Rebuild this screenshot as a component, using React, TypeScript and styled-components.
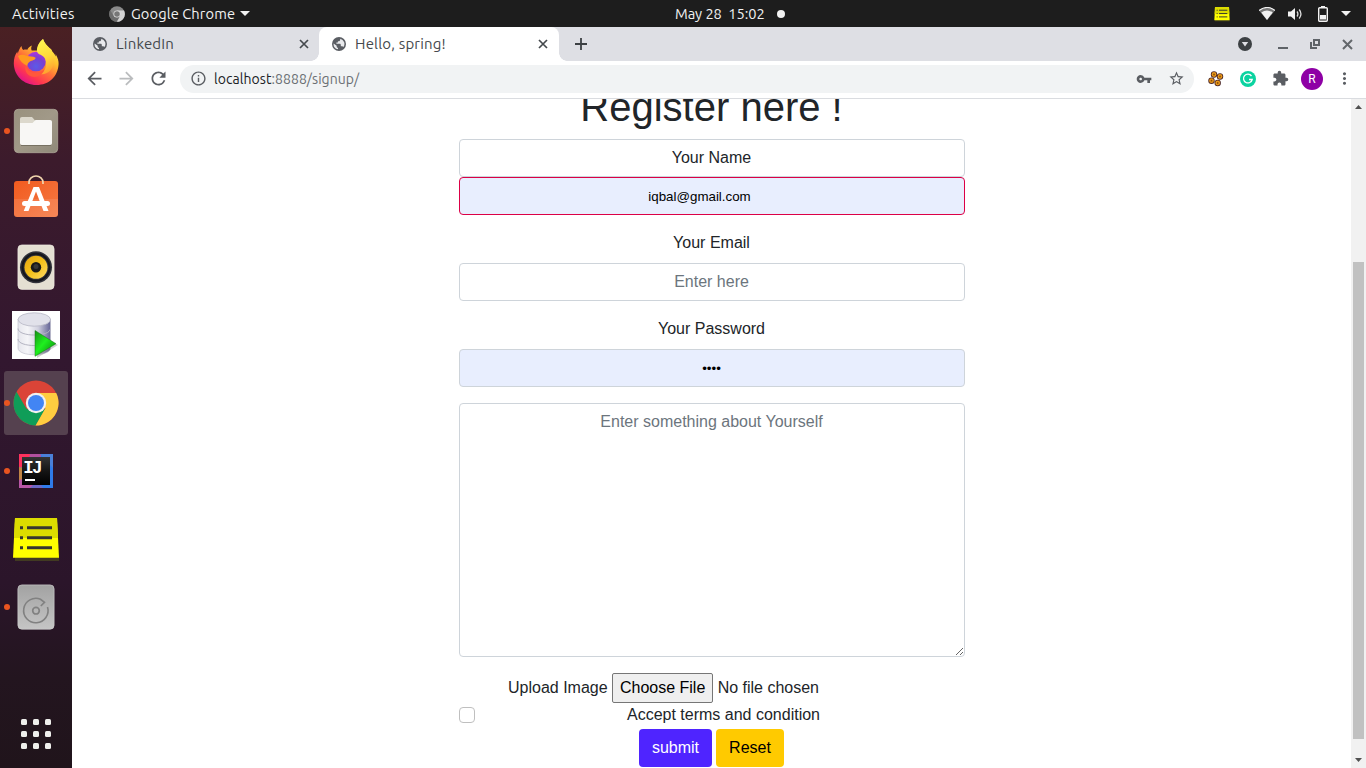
import React from "react";
import styled, { createGlobalStyle } from "styled-components";
import { MdArrowBack, MdArrowForward, MdRefresh, MdInfoOutline, MdVpnKey, MdStarBorder, MdExtension, MdMoreVert } from "react-icons/md";

const GlobalStyle = createGlobalStyle`
  * { box-sizing: border-box; }
  body { margin: 0; overflow: hidden; background: #fff; }
  svg { display: block; }
`;

const uiFont = `"Ubuntu", "Noto Sans", sans-serif`;

const Desktop = styled.div`
  display: flex;
  flex-direction: column;
  width: 1366px;
  height: 768px;
  overflow: hidden;
  font-family: ${uiFont};
`;

const TopBar = styled.header`
  display: flex;
  flex: none;
  align-items: center;
  height: 27px;
  padding: 0 15px 0 12px;
  background: #1d1d1d;
  color: #f2f2f2;
`;
const BarSide = styled.div<{ $width: number; $end?: boolean }>`
  display: flex;
  flex: none;
  align-items: center;
  width: ${(p) => p.$width}px;
  justify-content: ${(p) => (p.$end ? "flex-end" : "flex-start")};
`;
const BarText = styled.span<{ $width: number; $spacing?: number }>`
  width: ${(p) => p.$width}px;
  padding-bottom: 1px;
  font-size: 14.667px;
  line-height: 25px;
  white-space: pre;
  letter-spacing: ${(p) => p.$spacing ?? 0}px;
`;
const Gap = styled.span<{ $w: number }>`
  flex: none;
  width: ${(p) => p.$w}px;
`;

const Body = styled.div`
  display: flex;
  flex: 1;
  min-height: 0;
`;

const Dock = styled.nav`
  display: flex;
  flex: none;
  flex-direction: column;
  gap: 4px;
  width: 72px;
  padding: 4px 4px 2px;
  background: linear-gradient(#4a2023 0%, #3c1b2c 18%, #32172f 45%, #2b152a 75%, #23151f 88%, #20141b 100%);
`;
const DockItem = styled.div<{ $active?: boolean; $running?: boolean; $last?: boolean }>`
  position: relative;
  display: flex;
  flex: none;
  align-items: center;
  justify-content: center;
  height: 64px;
  margin-top: ${(p) => (p.$last ? "auto" : "0")};
  border-radius: 3px;
  background: ${(p) => (p.$active ? "#55414f" : "transparent")};
  &::before {
    content: "";
    display: ${(p) => (p.$running ? "block" : "none")};
    position: absolute;
    left: 0;
    top: 29px;
    width: 6px;
    height: 6px;
    border-radius: 50%;
    background: #e95420;
  }
`;
const AppGrid = styled.div`
  display: grid;
  grid-template-columns: repeat(3, 6px);
  gap: 6px;
`;
const AppDot = styled.i`
  height: 6px;
  border-radius: 1.5px;
  background: #efefec;
`;

const Browser = styled.section`
  display: flex;
  flex: 1;
  flex-direction: column;
  min-width: 0;
`;
const TabStrip = styled.div`
  display: flex;
  flex: none;
  height: 34px;
  background: #dedfe4;
  color: #45494d;
`;
const Tab = styled.div<{ $active?: boolean; $width: number }>`
  position: relative;
  display: flex;
  flex: none;
  align-items: center;
  width: ${(p) => p.$width}px;
  padding: 0 ${(p) => (p.$active ? 10 : 9)}px 0 ${(p) => (p.$active ? 12 : 20)}px;
  background: ${(p) => (p.$active ? "#fff" : "transparent")};
  border-radius: 8px 8px 0 0;
  &::before,
  &::after {
    content: "";
    display: ${(p) => (p.$active ? "block" : "none")};
    position: absolute;
    bottom: 0;
    width: 8px;
    height: 8px;
  }
  &::before {
    left: -8px;
    background: radial-gradient(circle at 0 0, transparent 7.5px, #fff 8px);
  }
  &::after {
    right: -8px;
    background: radial-gradient(circle at 100% 0, transparent 7.5px, #fff 8px);
  }
`;
const TabTitle = styled.span`
  flex: 1;
  margin-left: 8px;
  font-size: 15px;
  line-height: 34px;
  white-space: nowrap;
  letter-spacing: 0.18px;
`;
const StripButtons = styled.div`
  display: flex;
  flex: 1;
  align-items: center;
  padding: 0 12px 0 16px;
`;
const Spacer = styled.span`
  flex: 1;
`;

const Toolbar = styled.div`
  display: flex;
  flex: none;
  align-items: center;
  height: 38px;
  padding: 0 6px 2px;
  border-bottom: 1px solid #dadce0;
  background: #fff;
  color: #5a5d62;
`;
const Slot = styled.span<{ $muted?: boolean }>`
  display: flex;
  flex: none;
  align-items: center;
  justify-content: center;
  width: 32px;
  color: ${(p) => (p.$muted ? "#babcbe" : "inherit")};
`;
const Omnibox = styled.div`
  display: flex;
  flex: 1;
  align-items: center;
  height: 28px;
  margin: 0 6px;
  padding: 0 2px;
  border-radius: 14px;
  background: #f1f3f4;
`;
const Url = styled.span`
  flex: 1;
  font-size: 14px;
  line-height: 28px;
  color: #6b6f73;
  letter-spacing: 0.06px;
  b {
    font-weight: 400;
    color: #202124;
  }
`;
const Avatar = styled.span`
  width: 22px;
  height: 22px;
  border-radius: 50%;
  background: #8e00a5;
  color: #fff;
  font: 12px/22px Roboto, sans-serif;
  text-align: center;
`;

const Viewport = styled.div`
  display: flex;
  flex: 1;
  min-height: 0;
  overflow: hidden;
`;
const Page = styled.main`
  flex: 1;
  overflow: hidden;
  background: #fff;
  color: #212529;
  font: 16px/24px "Liberation Sans", sans-serif;
`;
const Form = styled.form`
  width: 506px;
  margin: -16px 0 0 386.5px;
  text-align: center;
`;
const Title = styled.h1`
  margin: 0 0 8px;
  font-size: 40px;
  font-weight: 400;
  line-height: 48px;
`;
const Caption = styled.label`
  display: block;
  margin: 16px 0 8px;
`;
const NameBox = styled.div`
  height: 38px;
  padding: 6px 12px;
  border: 1px solid #ced4da;
  border-radius: 4px;
`;
const Field = styled.input<{ $filled?: boolean; $invalid?: boolean }>`
  display: block;
  width: 100%;
  height: 38px;
  padding: ${(p) => (p.$filled ? "7px" : "5px")} ${(p) => (p.$invalid ? 36 : 12)}px 6px 12px;
  border: 1px solid ${(p) => (p.$invalid ? "#dc0046" : "#ced4da")};
  border-radius: 4px;
  outline: 0;
  background: ${(p) => (p.$filled ? "#e8eefe" : "#fff")};
  color: #000;
  font: ${(p) => (p.$filled ? "13.333px" : "16px")} "Liberation Sans", sans-serif;
  text-align: center;
  &::placeholder {
    color: #6c757d;
    opacity: 1;
  }
`;
const About = styled.textarea`
  display: block;
  width: 100%;
  height: 254px;
  margin: 16px 0;
  padding: 6px 12px;
  border: 1px solid #ced4da;
  border-radius: 4px;
  outline: 0;
  font: 16px/24px "Liberation Sans", sans-serif;
  text-align: center;
  &::placeholder {
    color: #6c757d;
    opacity: 1;
  }
`;
const UploadRow = styled.div`
  display: flex;
  align-items: center;
  height: 30px;
  padding-left: 49.5px;
  white-space: nowrap;
`;
const FileButton = styled.button`
  flex: none;
  width: 101px;
  height: 30px;
  margin: 0 5px 0 4px;
  padding: 0 0 0 1px;
  border: 1px solid #767676;
  border-radius: 2px;
  background: #efefef;
  color: #000;
  font: 16px "Liberation Sans", sans-serif;
`;
const TermsRow = styled.div`
  display: flex;
  align-items: center;
  height: 24px;
`;
const CheckBox = styled.span`
  width: 16px;
  height: 16px;
  margin-right: 152.5px;
  border: 1px solid #bfbfbf;
  border-radius: 4px;
`;
const Actions = styled.div`
  display: flex;
  justify-content: center;
  gap: 4px;
  margin-top: 2px;
`;
const Button = styled.button<{ $primary?: boolean }>`
  width: ${(p) => (p.$primary ? 73 : 68)}px;
  height: 38px;
  padding: 0;
  border: 0;
  border-radius: 4px;
  background: ${(p) => (p.$primary ? "#4f24ff" : "#ffca00")};
  color: ${(p) => (p.$primary ? "#fff" : "#000")};
  font: 16px "Liberation Sans", sans-serif;
`;

const ScrollTrack = styled.div`
  display: flex;
  flex: none;
  flex-direction: column;
  align-items: center;
  width: 15px;
  padding: 6px 0 6px;
  background: #f1f1f1;
`;
const ScrollThumb = styled.div`
  width: 11px;
  height: 477px;
  margin: 153px 0 auto;
  background: #c1c1c1;
`;

const Globe = () => (
  <svg width="16" height="16" viewBox="0 0 16 16">
    <circle cx="8" cy="8" r="7" fill="#5a5d63" />
    <path d="M9.2 2.7v1.1c0 .9-.7 1.5-1.5 1.5h-.8v1.3H5.4v1.2h3.1c.9 0 1.3.5 1.3 1.3v1.1h1.1c.8 0 1.3.3 1.6.8A5.4 5.4 0 0 0 9.2 2.7zM2.6 7.4A5.5 5.5 0 0 0 7 13.3v-1.5c-.8 0-1.3-.6-1.3-1.4v-.6z" fill="#e9eaed" />
  </svg>
);
const Cross = ({ size = 8, weight = 1.7 }: { size?: number; weight?: number }) => (
  <svg width={size + 4} height={size + 4} viewBox={`-2 -2 ${size + 4} ${size + 4}`}>
    <path d={`M0 0L${size} ${size}M${size} 0L0 ${size}`} stroke="currentColor" strokeWidth={weight} />
  </svg>
);
const Caret = () => (
  <svg width="10" height="5" viewBox="0 0 10 5">
    <path d="M0 0h10L5 5z" fill="#f2f2f2" />
  </svg>
);
const ScrollArrow = ({ down }: { down?: boolean }) => (
  <svg width="7" height="4" viewBox="0 0 7 4">
    <path d={down ? "M0 0h7L3.5 4z" : "M0 4h7L3.5 0z"} fill="#505050" />
  </svg>
);
const Notes = ({ size }: { size: number }) => (
  <svg width={size} height={size} viewBox="0 0 48 48">
    <path d="M3 42h44v4H3z" fill="#4b4a20" opacity=".7" />
    <path d="M3 3h42l2 39.7H1z" fill="#ff0" />
    <path d="M3 3h42l1 20H2z" fill="#dcdc00" />
    <path d="M8 12.7h3M15 12.7h25M8 22.7h3M15 22.7h25M8 32.7h3M15 32.7h25" stroke="#363630" strokeWidth="3" />
  </svg>
);

const Firefox = () => (
  <svg width="48" height="48" viewBox="0 0 48 48">
    <defs>
      <linearGradient id="ffBody" x1=".85" y1=".1" x2=".25" y2=".95">
        <stop offset="0" stopColor="#fff14a" />
        <stop offset=".3" stopColor="#ffc02e" />
        <stop offset=".55" stopColor="#ff7139" />
        <stop offset=".8" stopColor="#ff3750" />
        <stop offset="1" stopColor="#e31587" />
      </linearGradient>
      <radialGradient id="ffGlobe" cx=".5" cy=".75" r=".8">
        <stop offset="0" stopColor="#5a5be8" />
        <stop offset=".55" stopColor="#7a3fd0" />
        <stop offset="1" stopColor="#b833e1" />
      </radialGradient>
      <linearGradient id="ffFlame" x1=".5" y1="0" x2=".7" y2="1">
        <stop offset="0" stopColor="#fff44f" />
        <stop offset=".5" stopColor="#ffd93a" />
        <stop offset="1" stopColor="#ff9a2e" />
      </linearGradient>
    </defs>
    <path d="M9.5 7c.2 2 .8 3 1.8 4 1.3-.5 2.7-.6 4-.2 1-2 2.4-3.2 4.7-4.2-1 1.8-1 3.5-.3 5h6C25.500 6 27.500 3 31 0c1.300 4.400 4 6.200 6.700 9.300C39 10 40 11 40.300 12.500c1.700 1.500 2.700 3.300 3.500 5 .1-.8 0-1.600-.2-2.500C46 19.500 46.700 22 46.600 25 46 37.500 37 46 24.500 46 11.500 46 2 36.500 1.800 24.500 1.800 19.500 3 15.500 5.400 12.500c0 1 .1 1.600.4 2.300C6.500 11.500 7.800 9 9.500 7z" fill="url(#ffBody)" />
    <circle cx="24" cy="22.500" r="9.800" fill="url(#ffGlobe)" />
    <path d="M31 0c1.300 4.400 4 6.200 6.700 9.300 6 7 6.300 16 .3 22.500-3.200 3.400-8 4.200-12 2.700 6-.5 8.500-5 8-11-.4-5-3-7-6.700-8.300-4-1.500-3-9.700 3.700-15.200z" fill="url(#ffFlame)" />
    <path d="M6 17c3-2 6-1.500 9 0 2.500.3 6 .2 8.700 1.700-.5 2.500-3.500 2.500-5.700 3.800-2 1.200-2.500 2.700-2.700 4.500-4-2-7.500-5-9.300-10z" fill="#ff9a1f" />
    <path d="M14 25.500c0 5.500 5 8.500 11.500 8 3-.3 5-1.500 7-3-2 6-8 8.500-13 7-5-1.700-7.500-6.500-5.500-12z" fill="#ff583b" />
  </svg>
);
const Files = () => (
  <svg width="48" height="48" viewBox="0 0 48 48">
    <defs>
      <linearGradient id="filesBg" x1="0" y1="0" x2="1" y2="1">
        <stop offset="0" stopColor="#99917e" />
        <stop offset=".5" stopColor="#a19988" />
        <stop offset="1" stopColor="#8f8979" />
      </linearGradient>
    </defs>
    <rect x="2.3" y="2.3" width="43.4" height="43.4" rx="4" fill="url(#filesBg)" stroke="#b5ae9e" strokeWidth=".7" />
    <path d="M8 12c0-1.200.8-2 2-2h10l3.500 4H38v5H8z" fill="#dcd8cc" />
    <path d="M8 16h12.500l3-3H38c1.200 0 2 .8 2 2v21c0 1.200-.8 2-2 2H10c-1.200 0-2-.8-2-2z" fill="#f8f7f5" />
    <path d="M9 38.500h30" stroke="#777162" strokeWidth="1" />
  </svg>
);
const Software = () => (
  <svg width="48" height="48" viewBox="0 0 48 48">
    <defs>
      <linearGradient id="bag" x1="0" y1="0" x2="1" y2="1">
        <stop offset="0" stopColor="#f25b1f" />
        <stop offset="1" stopColor="#f47a45" />
      </linearGradient>
    </defs>
    <rect x="2" y="6" width="44" height="36" rx="3" fill="url(#bag)" />
    <path d="M2 24h44v15a3 3 0 0 1-3 3H5a3 3 0 0 1-3-3z" fill="#fff" opacity=".1" />
    <path d="M17 9V7.500a7 6.500 0 0 1 14 0V9" fill="none" stroke="#f1d5ad" strokeWidth="1.700" />
    <path d="M21.500 12h5.500l9.500 24H31.500L24 16.500 16.500 36H11.700z" fill="#fff" />
    <rect x="10" y="26" width="28" height="5" rx="2.500" fill="#fff" />
  </svg>
);
const Speaker = () => (
  <svg width="48" height="48" viewBox="0 0 48 48">
    <defs>
      <linearGradient id="cone" x1="0" y1="0" x2="1" y2="1">
        <stop offset="0" stopColor="#e5a611" />
        <stop offset=".5" stopColor="#f4c01b" />
        <stop offset="1" stopColor="#ffdc65" />
      </linearGradient>
    </defs>
    <rect x="5.900" y="1.900" width="36.200" height="44.500" rx="4" fill="#e4dfd2" stroke="#f5f2ea" strokeWidth=".6" />
    <circle cx="24" cy="24.300" r="16" fill="#31323a" />
    <circle cx="24" cy="24.300" r="13.500" fill="none" stroke="#15161c" strokeWidth="2" />
    <circle cx="24" cy="24.300" r="11.500" fill="url(#cone)" />
    <circle cx="24" cy="24.300" r="5.200" fill="#1b1a1a" />
    <circle cx="24" cy="23.600" r="2.500" fill="#383838" />
  </svg>
);
const Database = () => (
  <svg width="48" height="48" viewBox="0 0 48 48">
    <defs>
      <linearGradient id="cyl">
        <stop offset="0" stopColor="#e6e6ed" />
        <stop offset=".3" stopColor="#f5f5f8" />
        <stop offset=".62" stopColor="#d0d0df" />
        <stop offset="1" stopColor="#646496" />
      </linearGradient>
      <linearGradient id="play" x1="0" y1="0" x2="1" y2="1">
        <stop offset="0" stopColor="#159015" />
        <stop offset=".45" stopColor="#1ff01f" />
        <stop offset="1" stopColor="#087a08" />
      </linearGradient>
    </defs>
    <path d="M0 0h48v48H0z" fill="#fff" />
    <path d="M6 8v29c0 9 32.500 9 32.500 0V8z" fill="url(#cyl)" stroke="#bbbbc8" strokeWidth=".6" />
    <ellipse cx="22.300" cy="8.500" rx="16.200" ry="6.700" fill="#e1e1ea" stroke="#b6b6c4" strokeWidth=".8" />
    <path d="M6 17.500c0 8.700 32.500 8.700 32.500 0M6 28c0 8.700 32.500 8.700 32.500 0" fill="none" stroke="#b4b4c2" strokeWidth="1" />
    <path d="M25 22l21 12-21 13z" fill="#777" opacity=".35" />
    <path d="M23 19.500l21 13.200-21 12.600z" fill="url(#play)" stroke="#187318" strokeWidth=".5" />
  </svg>
);
const ChromeLogo = ({ size, mono }: { size: number; mono?: boolean }) => (
  <svg width={size} height={size} viewBox="1 1 46 46">
    <circle cx="24" cy="24" r="22.500" fill={mono ? "#8a8a8a" : "#db4437"} />
    <path d="M4.500 12.800A22.500 22.500 0 0 0 23.600 46.500L33.700 29.500 24 34 14.300 29.500z" fill={mono ? "#6d6d6d" : "#0f9d58"} />
    <path d="M24 14h20.200A22.500 22.500 0 0 1 23.600 46.500L33.400 29.300z" fill={mono ? "#d4d4d4" : "#ffcd40"} />
    <circle cx="24" cy="24" r="10.200" fill={mono ? "#ddd" : "#f1f1f1"} />
    <circle cx="24" cy="24" r="8" fill={mono ? "#777" : "#4285f4"} />
  </svg>
);
const Idea = () => (
  <svg width="48" height="48" viewBox="0 0 48 48">
    <defs>
      <linearGradient id="ijBlack" x1="0" y1="0" x2="0" y2="1">
        <stop offset="0" stopColor="#343434" />
        <stop offset=".5" stopColor="#151515" />
        <stop offset="1" stopColor="#000" />
      </linearGradient>
    </defs>
    <path d="M7 7h34v34H7z" fill="#2f7bea" />
    <path d="M7 7h13l4 4v13L7 20z" fill="#fe315d" />
    <path d="M18 7h12l-4 8H16z" fill="#b2509e" />
    <path d="M28 7h13v14z" fill="#4a80d8" />
    <path d="M7 20l10 2v19H7z" fill="#c18545" />
    <path d="M7 33l12-3 8 11H7z" fill="#b957a6" />
    <path d="M18 41l8-8 5 8z" fill="#6a67c5" />
    <path d="M10 10h28v28H10z" fill="url(#ijBlack)" />
    <text x="11.300 20" y="26" fill="#fff" fontFamily="Liberation Mono, monospace" fontWeight="700" fontSize="17.500">IJ</text>
    <path d="M13 32h10v2H13z" fill="#fff" />
  </svg>
);
const Disk = () => (
  <svg width="48" height="48" viewBox="0 0 48 48">
    <defs>
      <linearGradient id="metal" x1="0" y1="0" x2="0" y2="1">
        <stop offset="0" stopColor="#a2a2a2" />
        <stop offset="1" stopColor="#c5c5c5" />
      </linearGradient>
    </defs>
    <rect x="5.900" y="1.900" width="36.200" height="44.300" rx="4" fill="url(#metal)" stroke="#cbcbcb" strokeWidth=".7" />
    <path d="M35.500 24A12.200 12.200 0 1 1 28.500 16.300L32.500 19.300 28.800 23" fill="none" stroke="#818181" strokeWidth="1.600" />
    <circle cx="24" cy="27.700" r="3.300" fill="none" stroke="#818181" strokeWidth="1.700" />
  </svg>
);

const dockApps = [
  { name: "firefox", icon: <Firefox /> },
  { name: "files", icon: <Files />, running: true },
  { name: "software", icon: <Software /> },
  { name: "music", icon: <Speaker /> },
  { name: "database", icon: <Database /> },
  { name: "chrome", icon: <ChromeLogo size={46} />, running: true, active: true },
  { name: "idea", icon: <Idea />, running: true },
  { name: "notes", icon: <Notes size={48} /> },
  { name: "disk", icon: <Disk />, running: true },
];

const SystemTray = () => (
  <>
    <Notes size={16} />
    <Gap $w={29} />
    <svg width="16" height="14" viewBox="0 0 16 14">
      <path d="M0 3.500Q8-2.500 16 3.500L8 13z" fill="#777" />
      <path d="M0 3.500Q8-2.500 16 3.500" fill="none" stroke="#f2f2f2" strokeWidth="1.200" />
      <path d="M2.300 5.400Q8 1.500 13.700 5.400L8 13z" fill="#f2f2f2" />
    </svg>
    <Gap $w={13} />
    <svg width="15" height="14" viewBox="0 0 15 14">
      <path d="M0 4.500h3L7 1v12L3 9.500H0z" fill="#f2f2f2" />
      <path d="M9 4.500q1.800 2.500 0 5M11.200 2.500q3.500 4.500 0 9" fill="none" stroke="#ddd" strokeWidth="1.300" />
    </svg>
    <Gap $w={15} />
    <svg width="10" height="16" viewBox="0 0 10 16">
      <path d="M3 0h4v2H3z" fill="#f2f2f2" />
      <rect x=".7" y="1.700" width="8.600" height="13.600" rx="1" fill="none" stroke="#f2f2f2" strokeWidth="1.400" />
      <path d="M2 9h6v4.500H2z" fill="#f2f2f2" />
    </svg>
    <Gap $w={13} />
    <Caret />
  </>
);

const CookieIcon = () => (
  <svg width="16" height="16" viewBox="0 0 16 16">
    {[[6, 3.5], [12, 5.5], [3.5, 9.7], [9.7, 12]].map(([x, y]) => (
      <g key={x}>
        <circle cx={x} cy={y} r="3.200" fill="#4a2525" />
        <circle cx={x} cy={y} r="2.400" fill="#e99718" />
        <circle cx={x} cy={y} r=".9" fill="#8a5208" />
      </g>
    ))}
  </svg>
);

export default function App() {
  return (
    <Desktop>
      <GlobalStyle />
      <TopBar>
        <BarSide $width={663}>
          <BarText $width={97} $spacing={0.25}>Activities</BarText>
          <ChromeLogo size={16} mono />
          <Gap $w={6} />
          <BarText $width={109} $spacing={0.1}>Google Chrome</BarText>
          <Caret />
        </BarSide>
        <BarSide $width={274}>
          <BarText $width={102} $spacing={-0.07}>May 28  15:02</BarText>
          <svg width="8" height="8"><circle cx="4" cy="4" r="4" fill="#f2f2f2" /></svg>
        </BarSide>
        <BarSide $width={402} $end>
          <SystemTray />
        </BarSide>
      </TopBar>
      <Body>
        <Dock>
          {dockApps.map((a) => (
            <DockItem key={a.name} $running={a.running} $active={a.active}>{a.icon}</DockItem>
          ))}
          <DockItem $last>
            <AppGrid>{Array.from({ length: 9 }, (_, i) => <AppDot key={i} />)}</AppGrid>
          </DockItem>
        </Dock>
        <Browser>
          <TabStrip>
            <Tab $width={247}>
              <Globe />
              <TabTitle>LinkedIn</TabTitle>
              <Cross />
            </Tab>
            <Tab $width={240} $active>
              <Globe />
              <TabTitle>Hello, spring!</TabTitle>
              <Cross />
            </Tab>
            <StripButtons>
              <svg width="12" height="12" viewBox="0 0 12 12"><path d="M6 0v12M0 6h12" stroke="#3c4043" strokeWidth="1.800" /></svg>
              <Spacer />
              <svg width="14" height="14" viewBox="0 0 14 14">
                <circle cx="7" cy="7" r="7" fill="#3c4043" />
                <path d="M3.800 5h6.400L7 9.500z" fill="#dedfe4" />
              </svg>
              <Gap $w={26} />
              <svg width="10" height="10" viewBox="0 0 10 10"><path d="M0 9h10" stroke="#5f6368" strokeWidth="2" /></svg>
              <Gap $w={22} />
              <svg width="10" height="10" viewBox="0 0 10 10"><path d="M4 1h5v5H4zM1 3v6h6" fill="none" stroke="#5f6368" strokeWidth="2" /></svg>
              <Gap $w={21} />
              <svg width="13" height="13" viewBox="0 0 13 13"><path d="M2 2l9 9M11 2l-9 9" stroke="#63676b" strokeWidth="2" /></svg>
            </StripButtons>
          </TabStrip>
          <Toolbar>
            <Slot><MdArrowBack size={21} /></Slot>
            <Slot $muted><MdArrowForward size={21} /></Slot>
            <Slot><MdRefresh size={21} /></Slot>
            <Omnibox>
              <Slot><MdInfoOutline size={17} /></Slot>
              <Url><b>localhost</b>:8888/signup/</Url>
              <Slot><MdVpnKey size={16} /></Slot>
              <Slot><MdStarBorder size={17} /></Slot>
            </Omnibox>
            <Slot><CookieIcon /></Slot>
            <Slot>
              <svg width="16" height="16" viewBox="0 0 16 16">
                <circle cx="8" cy="8" r="8" fill="#0bd3a0" />
                <path d="M11.500 5A4.400 4.400 0 1 0 12.200 8.500H9" fill="none" stroke="#fff" strokeWidth="1.300" />
              </svg>
            </Slot>
            <Slot><MdExtension size={17} /></Slot>
            <Slot><Avatar>R</Avatar></Slot>
            <Slot><MdMoreVert size={19} /></Slot>
          </Toolbar>
          <Viewport>
            <Page>
              <Form>
                <Title>Register here !</Title>
                <NameBox>Your Name</NameBox>
                <Field $filled $invalid defaultValue="iqbal@gmail.com" />
                <Caption>Your Email</Caption>
                <Field placeholder="Enter here" />
                <Caption>Your Password</Caption>
                <Field $filled type="password" defaultValue="1234" />
                <About placeholder="Enter something about Yourself" />
                <UploadRow>
                  Upload Image
                  <FileButton type="button">Choose File</FileButton>
                  No file chosen
                </UploadRow>
                <TermsRow>
                  <CheckBox />
                  Accept terms and condition
                </TermsRow>
                <Actions>
                  <Button type="button" $primary>submit</Button>
                  <Button type="button">Reset</Button>
                </Actions>
              </Form>
            </Page>
            <ScrollTrack>
              <ScrollArrow />
              <ScrollThumb />
              <ScrollArrow down />
            </ScrollTrack>
          </Viewport>
        </Browser>
      </Body>
    </Desktop>
  );
}
